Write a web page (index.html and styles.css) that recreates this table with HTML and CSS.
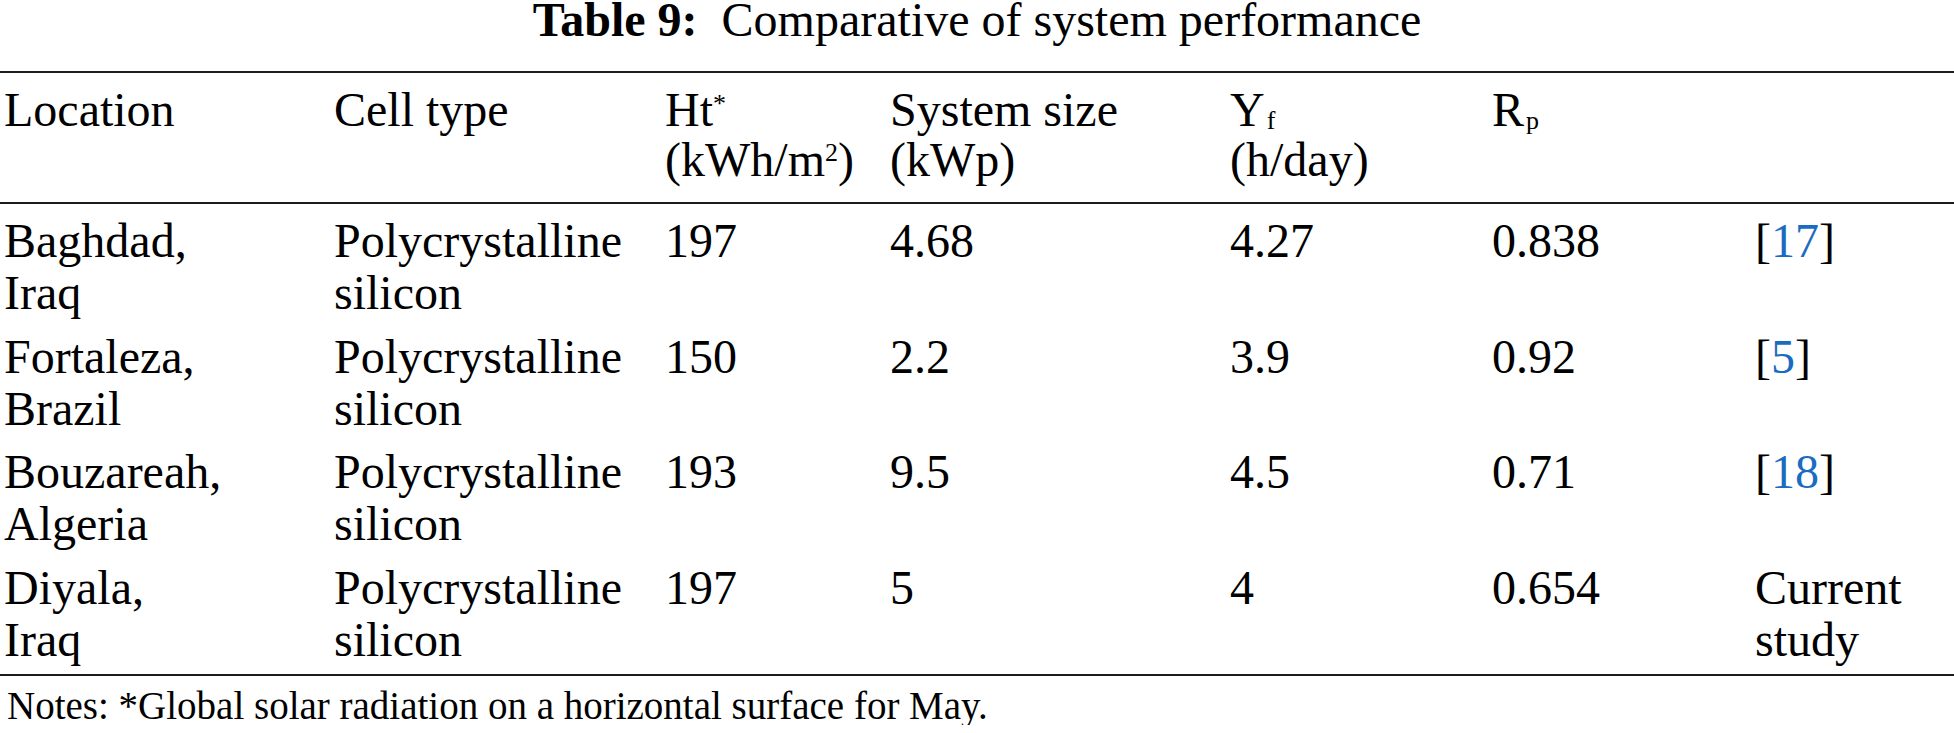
FILE: index.html
```html
<!DOCTYPE html>
<html lang="en">
<head>
<meta charset="utf-8">
<title>Table 9: Comparative of system performance</title>
<link rel="stylesheet" href="styles.css">
</head>
<body>
<div class="table-wrap">
  <div class="caption"><span class="caption-label">Table 9:</span>&nbsp; Comparative of system performance</div>
  <table class="data">
    <colgroup>
      <col class="c-loc">
      <col class="c-cell">
      <col class="c-ht">
      <col class="c-size">
      <col class="c-yf">
      <col class="c-rp">
      <col class="c-ref">
    </colgroup>
    <thead>
      <tr>
        <th>Location</th>
        <th>Cell type</th>
        <th>Ht<sup class="ast">*</sup><br>(kWh/m<sup class="sq">2</sup>)</th>
        <th>System size<br>(kWp)</th>
        <th>Y<sub class="sb">f</sub><br>(h/day)</th>
        <th>R<sub class="sb">p</sub></th>
        <th></th>
      </tr>
    </thead>
    <tbody>
      <tr>
        <td>Baghdad, Iraq</td>
        <td>Polycrystalline silicon</td>
        <td>197</td>
        <td>4.68</td>
        <td>4.27</td>
        <td>0.838</td>
        <td>[<a class="ref" href="#ref17">17</a>]</td>
      </tr>
      <tr>
        <td>Fortaleza, Brazil</td>
        <td>Polycrystalline silicon</td>
        <td>150</td>
        <td>2.2</td>
        <td>3.9</td>
        <td>0.92</td>
        <td>[<a class="ref" href="#ref5">5</a>]</td>
      </tr>
      <tr>
        <td>Bouzareah, Algeria</td>
        <td>Polycrystalline silicon</td>
        <td>193</td>
        <td>9.5</td>
        <td>4.5</td>
        <td>0.71</td>
        <td>[<a class="ref" href="#ref18">18</a>]</td>
      </tr>
      <tr>
        <td>Diyala, Iraq</td>
        <td>Polycrystalline silicon</td>
        <td>197</td>
        <td>5</td>
        <td>4</td>
        <td>0.654</td>
        <td>Current study</td>
      </tr>
    </tbody>
  </table>
  <p class="notes">Notes: *Global solar radiation on a horizontal surface for May.</p>
</div>
</body>
</html>
```

FILE: styles.css
```css
html, body {
  margin: 0;
  padding: 0;
  background: #ffffff;
}

body {
  font-family: "Liberation Serif", "Times New Roman", serif;
  color: #000000;
}

.table-wrap {
  width: 1954px;
}

.caption {
  font-size: 48px;
  line-height: 40px;
  text-align: center;
  margin-bottom: 31px;
  white-space: pre;
}

.caption-label {
  font-weight: bold;
}

.data {
  width: 1954px;
  table-layout: fixed;
  border-collapse: collapse;
  border-top: 2px solid #1c1c1c;
  border-bottom: 2px solid #1c1c1c;
  font-size: 48px;
}

.c-loc { width: 330px; }
.c-cell { width: 331px; }
.c-ht { width: 225px; }
.c-size { width: 340px; }
.c-yf { width: 262px; }
.c-rp { width: 263px; }
.c-ref { width: 203px; }

.data th {
  font-weight: normal;
  text-align: left;
  vertical-align: top;
  white-space: nowrap;
  line-height: 50px;
  padding: 12px 0 16.5px 4px;
  border-bottom: 2px solid #1c1c1c;
}

.data td {
  text-align: left;
  vertical-align: top;
  line-height: 52px;
  padding: 11.5px 108px 0 4px;
}

.data td:last-child {
  padding-right: 40px;
}

.data tbody tr:last-child td {
  padding-bottom: 8px;
}

.data sup,
.data sub {
  line-height: 0;
  font-size: 26px;
}

.data .ast {
  vertical-align: 14px;
}

.data .sq {
  vertical-align: 15px;
}

.data .sb {
  vertical-align: -3px;
  margin-left: 2px;
}

.ref {
  color: #1a6cc0;
  text-decoration: none;
}

.notes {
  margin: 11px 0 0 0;
  padding-left: 7px;
  font-size: 39px;
  line-height: 38px;
}
```
